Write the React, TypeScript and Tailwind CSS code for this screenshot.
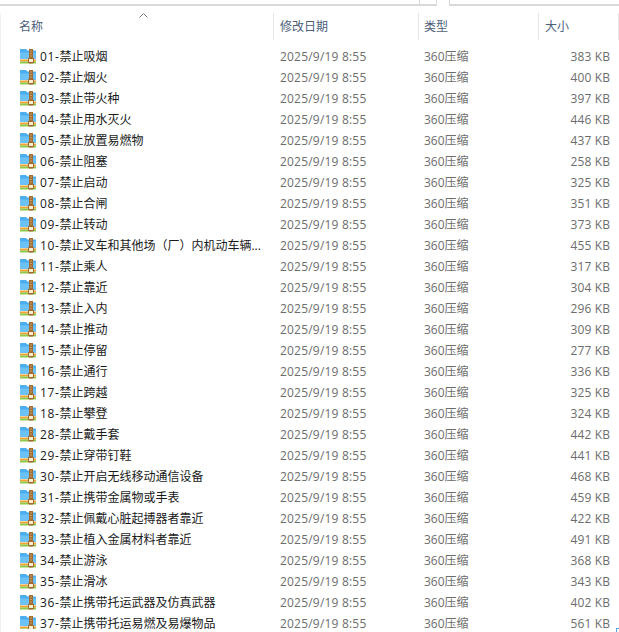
const rows: [string, string, string][] = [
  ["01-", "禁止吸烟", "383 KB"],
  ["02-", "禁止烟火", "400 KB"],
  ["03-", "禁止带火种", "397 KB"],
  ["04-", "禁止用水灭火", "446 KB"],
  ["05-", "禁止放置易燃物", "437 KB"],
  ["06-", "禁止阻塞", "258 KB"],
  ["07-", "禁止启动", "325 KB"],
  ["08-", "禁止合闸", "351 KB"],
  ["09-", "禁止转动", "373 KB"],
  ["10-", "禁止叉车和其他场（厂）内机动车辆...", "455 KB"],
  ["11-", "禁止乘人", "317 KB"],
  ["12-", "禁止靠近", "304 KB"],
  ["13-", "禁止入内", "296 KB"],
  ["14-", "禁止推动", "309 KB"],
  ["15-", "禁止停留", "277 KB"],
  ["16-", "禁止通行", "336 KB"],
  ["17-", "禁止跨越", "325 KB"],
  ["18-", "禁止攀登", "324 KB"],
  ["28-", "禁止戴手套", "442 KB"],
  ["29-", "禁止穿带钉鞋", "441 KB"],
  ["30-", "禁止开启无线移动通信设备", "468 KB"],
  ["31-", "禁止携带金属物或手表", "459 KB"],
  ["32-", "禁止佩戴心脏起搏器者靠近", "422 KB"],
  ["33-", "禁止植入金属材料者靠近", "491 KB"],
  ["34-", "禁止游泳", "368 KB"],
  ["35-", "禁止滑冰", "343 KB"],
  ["36-", "禁止携带托运武器及仿真武器", "402 KB"],
  ["37-", "禁止携带托运易燃及易爆物品", "561 KB"],
];

function ZipIcon() {
  return (
    <svg width="16" height="15" viewBox="0 0 16 15" className="-mt-[1px] shrink-0">
      <path d="M0 1C0 .4.4 0 1 0h5l1.5 1.5H15c.6 0 1 .4 1 1V10H0z" fill="#4aaef0" />
      <rect x="0" y="3.5" width="16" height="6.5" fill="#6cc2f6" />
      <rect x="0" y="10.5" width="16" height="2" fill="#f2a235" />
      <rect x="0" y="12.5" width="16" height="2" fill="#8fc84a" />
      <rect x="9" y="0" width="4" height="14.5" fill="#a06c34" />
      <rect x="10.5" y="1.5" width="1" height="1" fill="#ecd29c" />
      <rect x="10.5" y="4" width="1" height="1" fill="#ecd29c" />
      <rect x="10.5" y="6.5" width="1" height="1" fill="#ecd29c" />
      <rect x="8.5" y="9.5" width="5" height="4" fill="#fbeec8" stroke="#a06c34" strokeWidth="1" />
    </svg>
  );
}

function Sep() {
  return <div className="h-[27px] w-px bg-[#e5e5e5]" />;
}

export default function App() {
  return (
    <div
      className="relative h-[632px] w-[619px] overflow-hidden bg-white text-[12px]"
      style={{ fontFamily: '"Open Sans", "Noto Sans CJK SC", sans-serif' }}
    >
      <div className="flex h-[6px]">
        <div className="w-[420px] border-b-2 border-r border-[#d9d9d9]" />
        <div className="w-[17px] border-b-2 border-r border-[#d9d9d9]" />
        <div className="w-[12px]" />
        <div className="flex-1 border-b-2 border-l border-[#d9d9d9]" />
      </div>

      <div className="relative mt-[7px] flex h-[27px] items-center text-[#4c607a]">
        <svg width="9" height="5" viewBox="0 0 9 5" className="absolute left-[139px] top-0" fill="none" stroke="#808080">
          <path d="M.5 4.5l4-4 4 4" />
        </svg>
        <div className="w-[273px] pl-[19px]">名称</div>
        <Sep />
        <div className="w-[144px] pl-[6px]">修改日期</div>
        <Sep />
        <div className="w-[119px] pl-[5px]">类型</div>
        <Sep />
        <div className="w-[79px] pl-[6px]">大小</div>
        <Sep />
      </div>

      <div className="mt-[6px] h-[583px] overflow-hidden">
        {rows.map(([num, name, size]) => (
          <div key={num} className="flex h-[21px] items-center">
            <div className="flex w-[280px] items-center pl-[20px]">
              <ZipIcon />
              <span className="ml-[4px] whitespace-nowrap text-[#1a1a1a]">
                <span className="tracking-[0.6px]">{num}</span>
                {name}
              </span>
            </div>
            <div className="w-[144px] tracking-[0.2px] text-[#6d6d6d]">2025/9/19 8:55</div>
            <div className="w-[100px] text-[#6d6d6d]">360压缩</div>
            <div className="w-[86px] text-right tracking-[0.1px] text-[#6d6d6d]">{size}</div>
          </div>
        ))}
      </div>

      <div className="absolute bottom-0 left-0 top-[13px] w-px bg-[#f2f2f2]" />
      <div className="absolute left-[616px] top-[628px] h-[4px] w-[3px] border-l border-t border-[#5aa9e6]" />
    </div>
  );
}
